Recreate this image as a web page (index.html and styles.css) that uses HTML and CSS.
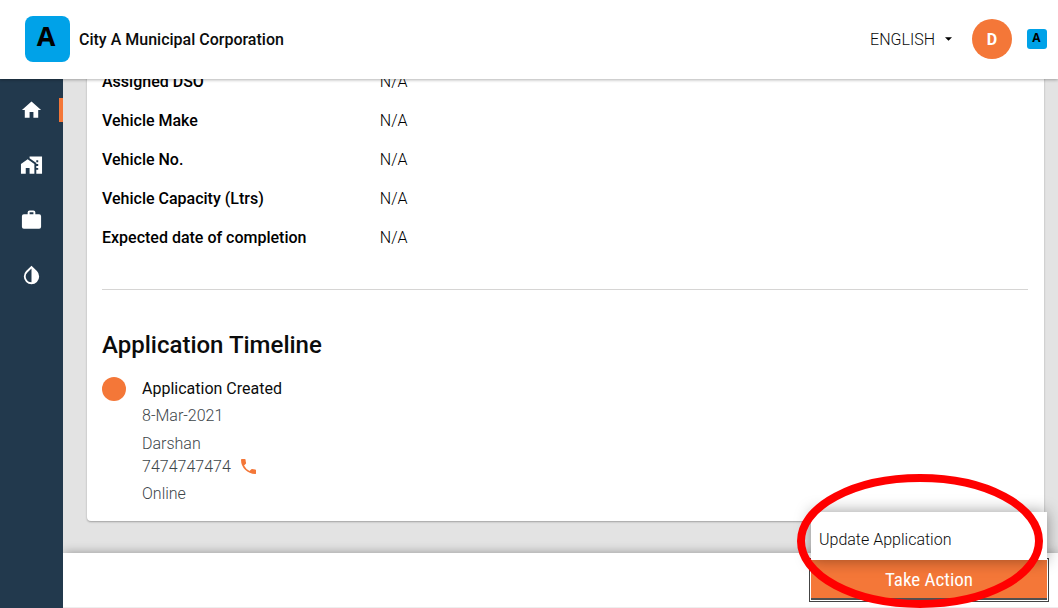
FILE: index.html
```html
<!DOCTYPE html>
<html lang="en">
<head>
<meta charset="utf-8">
<title>City A Municipal Corporation</title>
<link rel="stylesheet" href="styles.css">
</head>
<body>
<header class="topbar">
  <span class="logo">A</span>
  <span class="brand">City A Municipal Corporation</span>
  <button class="language" type="button">ENGLISH
    <svg class="caret" viewBox="0 0 8 4"><path d="M0 0h8L4 4z"/></svg>
  </button>
  <button class="avatar" type="button">D</button>
  <span class="logo logo-small">A</span>
</header>
<div class="shell">
  <nav class="sidebar">
    <a class="nav-item active" href="#" aria-label="Home"><svg viewBox="0 0 24 24"><path d="M10 20v-6h4v6h5v-8h3L12 3 2 12h3v8z"/></svg></a>
    <a class="nav-item" href="#" aria-label="Properties"><svg viewBox="0 0 24 24"><path d="M1 11v10h5v-6h4v6h5V11L8 6z"/><path fill-rule="evenodd" d="M10 3v1.97l7 5V11h2v2h-2v2h2v2h-2v4h6V3zm9 6h-2V7h2z"/></svg></a>
    <a class="nav-item" href="#" aria-label="Work"><svg viewBox="0 0 24 24"><path fill-rule="evenodd" d="M20 6h-4V4a2 2 0 0 0-2-2h-4a2 2 0 0 0-2 2v2H4a2 2 0 0 0-2 2v11a2 2 0 0 0 2 2h16a2 2 0 0 0 2-2V8a2 2 0 0 0-2-2zM14 6h-4V4h4z"/></svg></a>
    <a class="nav-item" href="#" aria-label="Water"><svg viewBox="0 0 24 24"><path fill-rule="evenodd" d="M17.66 7.93 12 2.27 6.34 7.93a8 8 0 1 0 11.32 0zM12 19.59a6 6 0 0 1-4.24-10.24L12 5.1z"/></svg></a>
  </nav>
  <div class="content">
    <main class="scroll">
      <section class="card">
        <dl class="details">
          <div class="row"><dt>Assigned DSO</dt><dd>N/A</dd></div>
          <div class="row"><dt>Vehicle Make</dt><dd>N/A</dd></div>
          <div class="row"><dt>Vehicle No.</dt><dd>N/A</dd></div>
          <div class="row"><dt>Vehicle Capacity (Ltrs)</dt><dd>N/A</dd></div>
          <div class="row"><dt>Expected date of completion</dt><dd>N/A</dd></div>
        </dl>
        <hr class="rule">
        <h2 class="title">Application Timeline</h2>
        <div class="timeline">
          <span class="dot"></span>
          <div class="event">
            <p class="event-name">Application Created</p>
            <p>8-Mar-2021</p>
            <div class="contact">
              <p>Darshan</p>
              <p class="phone">7474747474
                <svg viewBox="3 3 18 18"><path d="M6.62 10.79a15.15 15.15 0 0 0 6.59 6.59l2.2-2.2a1 1 0 0 1 1.02-.24 11.4 11.4 0 0 0 3.57.57 1 1 0 0 1 1 1V20a1 1 0 0 1-1 1A17 17 0 0 1 3 4a1 1 0 0 1 1-1h3.5a1 1 0 0 1 1 1 11.4 11.4 0 0 0 .57 3.57 1 1 0 0 1-.25 1.02z"/></svg>
              </p>
            </div>
            <p>Online</p>
          </div>
        </div>
      </section>
    </main>
    <footer class="actionbar">
      <div class="action">
        <button class="take-action" type="button">Take Action</button>
        <div class="menu"><button class="menu-item" type="button">Update Application</button></div>
        <svg class="highlight" viewBox="0 0 246 134"><ellipse cx="123" cy="67" rx="119" ry="63"/></svg>
      </div>
    </footer>
  </div>
</div>
</body>
</html>
```
FILE: styles.css
```css
* { box-sizing: border-box; }
body {
  margin: 0;
  height: 100vh;
  display: flex;
  flex-direction: column;
  overflow: hidden;
  font: 16px/23px Roboto, sans-serif;
  color: #0b0c0c;
  background: #e3e3e3;
}
button { font: inherit; color: inherit; border: 0; padding: 0; background: none; cursor: pointer; }
p, dl, dd, h2 { margin: 0; }

.topbar {
  position: relative;
  z-index: 2;
  flex: none;
  height: 79px;
  padding: 0 11px 1px 25px;
  display: flex;
  align-items: center;
  background: #fff;
  box-shadow: 0 1px 3px rgba(0, 0, 0, .3);
}
.logo {
  width: 45px;
  height: 46px;
  padding-right: 3px;
  border-radius: 8px;
  background: #00a2e8;
  color: #000;
  font: bold 27px/40px "Open Sans", sans-serif;
  text-align: center;
}
.logo-small {
  width: 20px;
  height: 20px;
  padding-right: 1px;
  border-radius: 3px;
  font-size: 12px;
  line-height: 18px;
}
.brand { margin-left: 9px; font-weight: 500; }
.language {
  margin-left: auto;
  display: flex;
  align-items: center;
  gap: 10px;
  font-weight: 300;
}
.caret { width: 7px; height: 4px; }
.avatar {
  width: 40px;
  height: 40px;
  margin: 0 15px 0 20px;
  border-radius: 50%;
  background: #f47738;
  color: #fff;
  font-weight: 700;
}

.shell { flex: 1; min-height: 0; display: flex; }
.sidebar {
  position: relative;
  z-index: 1;
  flex: none;
  width: 63px;
  padding-top: 19px;
  display: flex;
  flex-direction: column;
  gap: 31px;
  background: #22394d;
}
.nav-item {
  height: 24px;
  display: flex;
  align-items: center;
  justify-content: center;
  border-right: 4px solid transparent;
  border-left: 4px solid transparent;
}
.nav-item.active { border-right-color: #f47738; }
.nav-item svg { width: 23px; height: 24px; fill: #fff; }

.content { flex: 1; min-width: 0; display: flex; flex-direction: column; }
.scroll {
  flex: 1;
  min-height: 0;
  overflow: hidden;
  display: flex;
  flex-direction: column;
  justify-content: flex-end;
  padding: 0 14px 32px 24px;
}
.card {
  flex: none;
  padding: 16px 16px 16px 15px;
  background: #fff;
  border-radius: 4px;
  box-shadow: 0 1px 2px rgba(0, 0, 0, .3);
}
.details { display: grid; gap: 16px; }
.row { display: grid; grid-template-columns: 30% 1fr; }
.row dt { font-weight: 500; color: #000; }
.row dd { font-weight: 300; color: #000; }
.rule { margin: 40px 0; border: 0; border-top: 1px solid #d6d5d4; }
.title { margin-bottom: 17px; font-size: 24px; line-height: 30px; font-weight: 500; }
.timeline { display: flex; gap: 16px; }
.dot { width: 24px; height: 24px; border-radius: 50%; background: #f47738; }
.event { display: grid; gap: 4px; color: #3d464a; font-weight: 300; }
.event-name { color: #0b0c0c; font-weight: 400; }
.contact { padding-top: 1px; }
.phone { display: flex; align-items: center; gap: 10px; }
.phone svg { width: 15px; height: 15px; fill: #f47738; }

.actionbar {
  flex: none;
  position: relative;
  padding: 7px 11px;
  display: flex;
  justify-content: flex-end;
  background: #fff;
  border-bottom: 1px solid #eee;
  box-shadow: 0 0 10px rgba(0, 0, 0, .35);
}
.action { position: relative; width: 236px; }
.take-action {
  display: block;
  width: 100%;
  height: 40px;
  padding-bottom: 2px;
  background: #f47738;
  color: #fff;
  font-family: "Roboto Condensed", Roboto, sans-serif;
  font-size: 19px;
  font-weight: 400;
  box-shadow: inset 0 -2px #505050;
  outline: 1px solid #444;
  outline-offset: 1px;
}
.menu {
  position: absolute;
  bottom: 100%;
  left: 0;
  right: 0;
  background: #fff;
  box-shadow: 0 0 16px rgba(0, 0, 0, .4);
}
.menu-item { width: 100%; height: 48px; padding: 6px 8px 0; text-align: left; font-weight: 300; }
.highlight {
  position: absolute;
  left: -14px;
  bottom: -8px;
  width: 246px;
  height: 134px;
  fill: none;
  stroke: #f00;
  stroke-width: 8px;
  pointer-events: none;
}
```
